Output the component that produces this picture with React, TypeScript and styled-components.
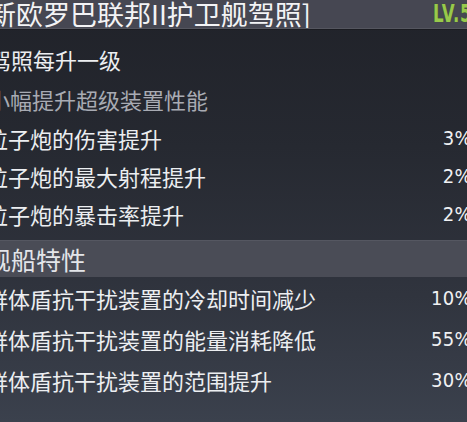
import React from 'react';
import styled, { createGlobalStyle } from 'styled-components';

const GlobalStyle = createGlobalStyle`
    html, body {
        margin: 0;
        padding: 0;
        background: #2a2d36;
        overflow: hidden;
    }
    #root {
        width: 467px;
        height: 422px;
        overflow: hidden;
    }
`;

const cjk = `"Noto Sans CJK SC", "Noto Sans", sans-serif`;
const digits = `"DejaVu Sans Condensed", "DejaVu Sans", "Liberation Sans Narrow", sans-serif`;

const Panel = styled.div`
    margin-left: -14px;
    width: 486px;
    height: 422px;
    display: flex;
    flex-direction: column;
    background: linear-gradient(180deg, #202229 0%, #262931 35%, #30343e 70%, #3b414d 100%);
    font-family: ${cjk};
    color: #eceef1;
`;

const Header = styled.div`
    height: 28px;
    flex-shrink: 0;
    display: flex;
    align-items: center;
    padding-left: 3px;
    background: #464752;
    border-bottom: 1px solid #55565f;
    box-shadow: 0 1px 0 #1b1c22;
    overflow: hidden;
`;

const Title = styled.div`
    flex: 1;
    font-size: 27px;
    line-height: 28px;
    color: #f3f3f5;
    white-space: nowrap;
`;

const Level = styled.div`
    width: 39px;
    flex-shrink: 0;
    white-space: nowrap;
    font-family: ${digits};
    font-stretch: condensed;
    font-weight: bold;
    font-size: 25px;
    line-height: 28px;
    letter-spacing: 1px;
    color: #98c94c;
    text-shadow: 0 0 1px #3f5a1c;
    transform: scaleX(0.74);
    transform-origin: left center;
`;

const Body = styled.div`
    padding-top: 10px;
    display: flex;
    flex-direction: column;
`;

const Row = styled.div<{ $h: number; $indent?: number; $dim?: boolean }>`
    height: ${(p) => p.$h}px;
    display: flex;
    align-items: center;
    justify-content: space-between;
    padding-left: ${(p) => p.$indent ?? 0}px;
    font-size: 22px;
    color: ${(p) => (p.$dim ? '#a8abb3' : '#eceef1')};
    white-space: nowrap;
`;

const Value = styled.span`
    font-family: ${digits};
    font-stretch: condensed;
    font-size: 20px;
    color: #f0f1f3;
    letter-spacing: 0.3px;
`;

const Band = styled.div`
    margin-top: 7px;
    height: 37px;
    display: flex;
    align-items: center;
    background: #4a4c56;
    border-top: 1px solid #555761;
    box-sizing: border-box;
    font-size: 25px;
    color: #e3e5e9;
    white-space: nowrap;
`;

const stats = [
    { label: '粒子炮的伤害提升', value: '3%' },
    { label: '粒子炮的最大射程提升', value: '2%' },
    { label: '粒子炮的暴击率提升', value: '2%' },
];

const traits = [
    { label: '群体盾抗干扰装置的冷却时间减少', value: '10%' },
    { label: '群体盾抗干扰装置的能量消耗降低', value: '55%' },
    { label: '群体盾抗干扰装置的范围提升', value: '30%' },
];

export default function App() {
    return (
        <>
            <GlobalStyle />
            <Panel>
                <Header>
                    <Title>新欧罗巴联邦II护卫舰驾照]</Title>
                    <Level>LV.5</Level>
                </Header>
                <Body>
                    <Row $h={40} $indent={3}>
                        驾照每升一级
                    </Row>
                    <Row $h={40} $indent={2} $dim>
                        小幅提升超级装置性能
                    </Row>
                    {stats.map((s) => (
                        <Row key={s.label} $h={38}>
                            <span>{s.label}</span>
                            <Value>{s.value}</Value>
                        </Row>
                    ))}
                    <Band>舰船特性</Band>
                    {traits.map((t) => (
                        <Row key={t.label} $h={41}>
                            <span>{t.label}</span>
                            <Value>{t.value}</Value>
                        </Row>
                    ))}
                </Body>
            </Panel>
        </>
    );
}
